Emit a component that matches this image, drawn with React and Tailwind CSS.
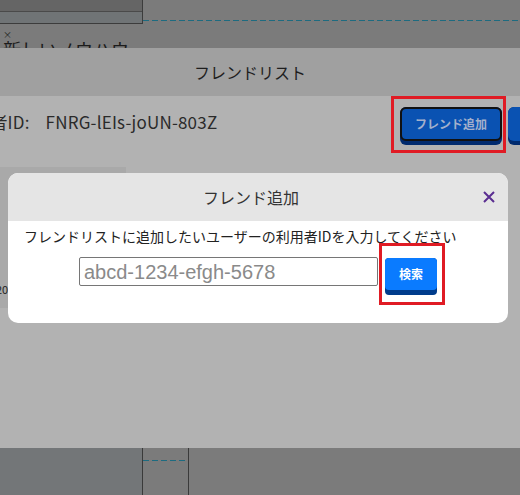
import React from 'react';

const jp = "font-['Noto_Sans_CJK_JP','Noto_Sans',sans-serif]";

const Highlight = ({ className }) => (
  <div className={`absolute border-[3px] border-[#e01b24] pointer-events-none ${className}`} />
);

const App = () => {
  return (
    <div className={`relative w-[520px] h-[495px] overflow-hidden bg-[#7b7b7b] ${jp}`}>
      {/* Page behind the dialogs */}
      <div className="flex flex-col h-full">
        <div className="flex">
          <div className="w-[143px] h-[24px] flex flex-col border-r border-b border-[#3c3c3c]">
            <div className="h-[12px] bg-[#656565] border-b border-[#4a4a4a]" />
            <div className="flex-1 bg-[#707476]" />
          </div>
          <div className="flex-1 pt-[20px]">
            <div className="h-px bg-[repeating-linear-gradient(90deg,#1d6b80_0_6px,transparent_6px_9px)]" />
          </div>
        </div>
        <div className="relative h-[24px]">
          <span className="absolute left-[3px] top-[6px] text-[9px] leading-none text-[#222]">×</span>
          <span className="absolute left-[3px] top-[13px] text-[18px] leading-[24px] text-[#1c1c1c] whitespace-nowrap">新しいノウハウ</span>
        </div>
        <div className="flex-1" />
        <div className="flex h-[47px]">
          <div className="w-[143px] bg-[#737678] border-r border-[#3a3a3a]" />
          <div className="w-[46px] border-r border-[#3a3a3a] pt-[12px]">
            <div className="h-px bg-[repeating-linear-gradient(90deg,#1d6b80_0_6px,transparent_6px_9px)]" />
          </div>
          <div className="flex-1" />
        </div>
      </div>

      {/* Friend list panel */}
      <div className="absolute left-0 right-0 top-[48px] h-[400px] bg-[#b2b2b2] flex flex-col">
        <div className="h-[48px] bg-[#a0a0a0] flex items-center pl-[194px] text-[16px] text-[#1e1e1e]">
          フレンドリスト
        </div>
        <div className="flex items-start h-[71px]">
          <div className="w-[400px] shrink-0 pt-[14px] text-[17px] leading-[24px] text-[#2a2a2a] whitespace-nowrap tracking-[0.2px]">
            <span className="-ml-[44px]">利用者ID:</span>
            <span className="ml-[16px]">FNRG-lEIs-joUN-803Z</span>
          </div>
          <div className="relative mt-[11px] shrink-0">
            <button className="w-[102px] h-[38px] rounded-[6px] bg-[#002a6e] pb-[4px]">
              <div className="h-[34px] rounded-[6px] border-2 border-[#111] bg-[#0a52b2] flex items-center justify-center text-[12px] font-bold text-[#a3b0cc]">
                フレンド追加
              </div>
            </button>
            <Highlight className="-left-[9px] -top-[11px] w-[115px] h-[57px]" />
          </div>
          <button className="ml-[6px] mt-[11px] w-[100px] h-[38px] shrink-0 rounded-[6px] bg-[#002a6e] pb-[4px]">
            <div className="h-[34px] rounded-[6px] bg-[#0a52b2]" />
          </button>
        </div>
        <div className="w-[126px] h-[141px] bg-[#a9a9a9] flex items-end pb-[13px]">
          <span className="-ml-[4px] text-[11px] leading-none text-[#222]">2020</span>
        </div>
      </div>

      {/* Add friend dialog */}
      <div className="absolute left-[8px] top-[173px] w-[500px] rounded-[10px] overflow-hidden bg-white">
        <div className="relative h-[48px] bg-[#e5e5e5] flex items-center pl-[195px] text-[16px] text-[#333]">
          フレンド追加
          <button className="absolute right-[11px] top-[16px] w-[16px] h-[16px] flex items-center justify-center text-[#5a2d91]">
            <svg width="12" height="12" viewBox="0 0 12 12" fill="none" stroke="currentColor" strokeWidth="2">
              <path d="M1 1 L11 11 M11 1 L1 11" />
            </svg>
          </button>
        </div>
        <div className="pt-[5px] pl-[16px] text-[14px] leading-[20px] text-[#222] whitespace-nowrap">
          フレンドリストに追加したいユーザーの利用者IDを入力してください
        </div>
        <div className="flex justify-center items-start gap-[7px] pt-[11px] pb-[28px]">
          <input
            type="text"
            placeholder="abcd-1234-efgh-5678"
            className="w-[299px] h-[29px] border border-[#767676] rounded-[2px] px-[4px] text-[20px] font-['Liberation_Sans',Arial,sans-serif] placeholder:text-[#8a8a8a] outline-none"
          />
          <div className="relative mt-[1px]">
            <button className="w-[52px] h-[37px] rounded-[4px] bg-[#003c8c] pb-[5px]">
              <div className="h-[32px] rounded-[4px] bg-[#0a7bff] flex items-center justify-center text-[12px] font-bold text-white">
                検索
              </div>
            </button>
            <Highlight className="-left-[6px] -top-[15px] w-[66px] h-[62px]" />
          </div>
        </div>
      </div>
    </div>
  );
};

export default App;
